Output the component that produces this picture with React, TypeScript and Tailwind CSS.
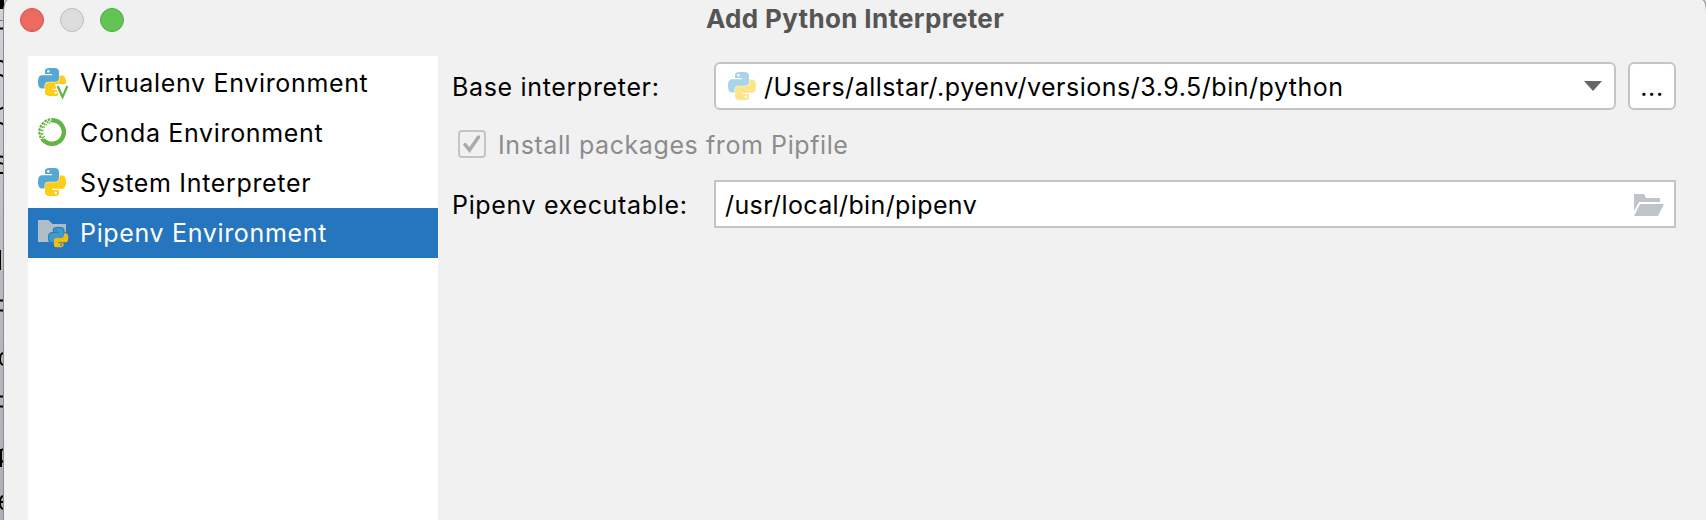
import React from "react";

function PythonGlyph({ blue = "#55a8d5", yellow = "#fecd16" }: { blue?: string; yellow?: string }) {
  return (
    <>
      <path fill={blue} fillRule="evenodd" d="M7 4V2.600C7 .9 8.600 0 11.600 0h4.800C19.400 0 21 1.300 21 3.800V10c0 2.400-1.300 3.700-3.700 3.700h-6.500c-2.600 0-4.300 1.600-4.300 4.200V20.500H4C1.300 20.500 0 18.100 0 14s1.300-6.800 4-6.800h10V6H7zM10.300 2a1.300 1.300 0 1 0 .01 0z" />
      <path fill={yellow} fillRule="evenodd" d="M21 24v1.400c0 1.700-1.600 2.600-4.600 2.600h-4.800C8.600 28 7 26.700 7 24.200V18c0-2.400 1.300-3.700 3.700-3.700h6.500c2.600 0 4.300-1.600 4.300-4.200V7.500H24c2.700 0 4 2.400 4 6.500s-1.300 6.800-4 6.800H14V22h7zM17.700 23.400a1.300 1.300 0 1 0 .01 0z" />
    </>
  );
}

function PythonIcon({ pale = false }: { pale?: boolean }) {
  return (
    <svg className={pale ? "size-7 shrink-0 opacity-50" : "size-7 shrink-0"} viewBox="0 0 28 28">
      <PythonGlyph />
    </svg>
  );
}

function VirtualenvIcon() {
  return (
    <svg className="-mr-1 h-7 w-8 shrink-0 overflow-visible" viewBox="0 0 32 28">
      <PythonGlyph />
      <path fill="#fff" d="M17 16h14v14h-9.500z" />
      <path fill="none" stroke="#62b543" strokeWidth="2.200" d="M19.600 18 24.500 29l4.900-11" />
    </svg>
  );
}

function CondaIcon() {
  return (
    <svg className="size-7 shrink-0" viewBox="0 0 28 28">
      <path fill="none" stroke="#62b543" strokeWidth="4.400" d="M14 2.200a11.800 11.800 0 1 1-9 19.400" />
      <path fill="none" stroke="#62b543" strokeWidth="2.200" strokeDasharray="2.600 1" d="M5 22.800A12.700 12.700 0 0 1 14 1.200" />
      <path fill="none" stroke="#62b543" strokeWidth="1.800" strokeDasharray="1.800 1.700" strokeDashoffset="1.700" d="M6.500 21.500A10.600 10.600 0 0 1 14 3.400" />
      <path fill="none" stroke="#62b543" strokeWidth="1.200" strokeDasharray="1.200 2" d="M6.500 19A9 9 0 0 1 13 5" />
    </svg>
  );
}

function PipenvIcon() {
  return (
    <svg className="-mr-1 h-7 w-8 shrink-0 overflow-visible" viewBox="0 0 32 28">
      <path fill="#afbdc5" d="M0 2h10.500l4 4H28v18H0z" />
      <g transform="translate(11 10) scale(.69)">
        <g stroke="#2675bf" strokeWidth="3">
          <PythonGlyph blue="#2675bf" yellow="#2675bf" />
        </g>
        <PythonGlyph blue="#3e9ace" yellow="#edbd16" />
      </g>
    </svg>
  );
}

const environments = [
  { label: "Virtualenv Environment", icon: <VirtualenvIcon />, selected: false },
  { label: "Conda Environment", icon: <CondaIcon />, selected: false },
  { label: "System Interpreter", icon: <PythonIcon />, selected: false },
  { label: "Pipenv Environment", icon: <PipenvIcon />, selected: true },
];

function Backdrop() {
  return (
    <div className="h-full w-1 shrink-0 bg-gradient-to-b from-[#d0d4d8] via-[#b9bbc1] to-[#aeb0b6]">
      <svg className="block" width="4" height="520" viewBox="0 0 4 520">
        <path fill="#000" d="M0 0h4v9H0z" />
        <path fill="none" stroke="#777b80" strokeWidth="1" d="M0 20.500h4" />
        <path fill="none" stroke="#000" strokeWidth="2" d="M0 28.500h4M0 61q3 0 4 2M0 75q2 0 4 2M0 109q3-1 4-2M0 123q2 0 4 2M0 156.500q3 0 4 1M0 163q4 1 4 2M0 173h4M0 250v20M0 300.500h4M0 310.500h4M4 353q-4 0-4 6t4 6M0 396.500h4M0 406.500h4M1 449v18M1 451q1-2 3-2M1 460q1 2 3 2M4 496q-4 0-4 6.500t4 6.500M0 502h4" />
      </svg>
    </div>
  );
}

export default function App() {
  return (
    <div className="flex h-[520px] w-[1706px] overflow-hidden bg-[#d0d2d6] font-[Inter,'Liberation_Sans',sans-serif] text-[25px] tracking-[0.66px] text-black">
      <Backdrop />
      <main className="flex min-w-0 flex-1 flex-col rounded-tl-[4px_13px] rounded-tr-[4px_12px] bg-[#f1f1f1] shadow-[0_0_0_1px_#8b8c90]">
        <header className="grid h-14 shrink-0 grid-cols-[1fr_auto_1fr]">
          <div className="flex gap-4 pt-2 pl-4">
            <span className="size-6 rounded-full border border-[#ce5347] bg-[#ec6a5e]" />
            <span className="size-6 rounded-full border border-[#bdbdbd] bg-[#dddddd]" />
            <span className="size-6 rounded-full border border-[#50a93f] bg-[#61c454]" />
          </div>
          <h1 className="h-[38px] text-[26px] leading-[38px] font-bold tracking-[0.33px] text-[#555]">Add Python Interpreter</h1>
        </header>
        <div className="flex min-h-0 flex-1 pl-6">
          <nav className="w-[410px] shrink-0 bg-white pt-0.5">
            {environments.map((item) => (
              <div
                key={item.label}
                className={item.selected ? "flex h-[50px] items-start gap-3.5 bg-[#2675bf] pt-2.5 pl-2.5 text-white" : "flex h-[50px] items-start gap-3.5 pt-2.5 pl-2.5"}
              >
                {item.icon}
                <span className="pt-px leading-7 whitespace-nowrap">{item.label}</span>
              </div>
            ))}
          </nav>
          <section className="flex min-w-0 flex-1 flex-col pt-1.5 pr-[30px] pl-3.5">
            <div className="flex h-12 items-center">
              <label className="w-[262px] shrink-0 pt-1">Base interpreter:</label>
              <div className="flex h-12 w-[902px] items-center gap-2 rounded-md border-2 border-[#c4c4c4] bg-white pr-3 pl-3">
                <PythonIcon pale />
                <span className="flex-1 pt-1 tracking-[0.52px] whitespace-nowrap">/Users/allstar/.pyenv/versions/3.9.5/bin/python</span>
                <svg className="h-2.5 w-[18px]" viewBox="0 0 18 10"><path fill="#666" d="M0 0h18L9 10z" /></svg>
              </div>
              <button className="ml-3 h-12 w-12 rounded-md border-2 border-[#c4c4c4] bg-white pt-1">...</button>
            </div>
            <div className="flex h-[70px] items-center gap-3 pb-0.5 pl-1.5 text-[#8c8c8c]">
              <svg className="size-7" viewBox="0 0 28 28" fill="none">
                <rect x="1" y="1" width="26" height="26" rx="3" stroke="#c4c4c4" strokeWidth="2" />
                <path d="m7 14.500 4.500 5.500L20.500 7" stroke="#ababab" strokeWidth="3.500" strokeLinecap="round" />
              </svg>
              <span className="pt-[3px] tracking-[0.59px]">Install packages from Pipfile</span>
            </div>
            <div className="flex h-12 items-center">
              <label className="w-[262px] shrink-0 pt-[3px]">Pipenv executable:</label>
              <div className="flex h-12 flex-1 items-center border-2 border-[#c4c4c4] bg-white pr-2.5 pl-[9px]">
                <span className="flex-1 pt-[3px] tracking-[0.38px]">/usr/local/bin/pipenv</span>
                <svg className="mt-0.5 h-[22px] w-[30px]" viewBox="0 0 30 22" fill="#bfc5ca">
                  <path d="M0 0h10l2 4h14v4H5L0 17zM6 10h24l-6 12H0z" />
                </svg>
              </div>
            </div>
          </section>
        </div>
      </main>
    </div>
  );
}
